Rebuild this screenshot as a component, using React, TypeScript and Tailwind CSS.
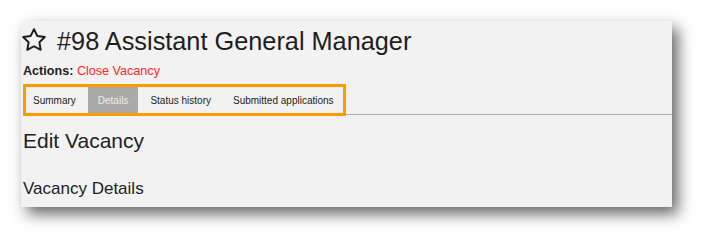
import React from "react";

export default function App() {
  const tabs = ["Summary", "Details", "Status history", "Submitted applications"];
  return (
    <div className="w-[714px] h-[249px] bg-white relative overflow-hidden" style={{ fontFamily: '"Liberation Sans", Arial, sans-serif' }}>
      <div className="absolute left-[21px] top-[21px] w-[651px] h-[186px] bg-[#f2f2f2] shadow-[6px_7px_14px_rgba(0,0,0,0.6)] pt-[5px] pl-[2px]">
        <div className="flex items-start">
          <svg width="26" height="26" viewBox="0 0 24 24" className="ml-[-2px] mt-[1px] shrink-0">
            <polygon
              points="12,2 15.09,8.26 22,9.27 17,14.14 18.18,21.02 12,17.77 5.82,21.02 7,14.14 2,9.27 8.91,8.26"
              fill="none"
              stroke="#1e1e1e"
              strokeWidth="1.8"
              strokeLinejoin="round"
            />
          </svg>
          <h1 className="ml-[10px] text-[25.3px] leading-[30px] text-[#1e1e1e]">#98 Assistant General Manager</h1>
        </div>
        <div className="mt-[7px] text-[12.6px] leading-[16px] text-[#222]">
          <span className="font-bold">Actions:</span>{" "}
          <span className="text-[#ff2626]">Close Vacancy</span>
        </div>
        <div className="relative mt-[8px] flex border-b border-[#b0b0b0] h-[28px]">
          {tabs.map((t) => (
            <div
              key={t}
              className={
                "px-[10px] mr-[2px] h-[27px] leading-[27px] text-[10px] " +
                (t === "Details" ? "bg-[#a9a9a9] text-[#ececec]" : "text-[#222]")
              }
            >
              {t}
            </div>
          ))}
          <div className="absolute left-0 top-[-3px] w-[323px] h-[32px] border-[3px] border-[#ff9a00]" />
        </div>
        <h2 className="mt-[13px] text-[21px] leading-[25px] text-[#222]">Edit Vacancy</h2>
        <h3 className="mt-[26px] text-[17px] leading-[20px] text-[#222]">Vacancy Details</h3>
      </div>
    </div>
  );
}
